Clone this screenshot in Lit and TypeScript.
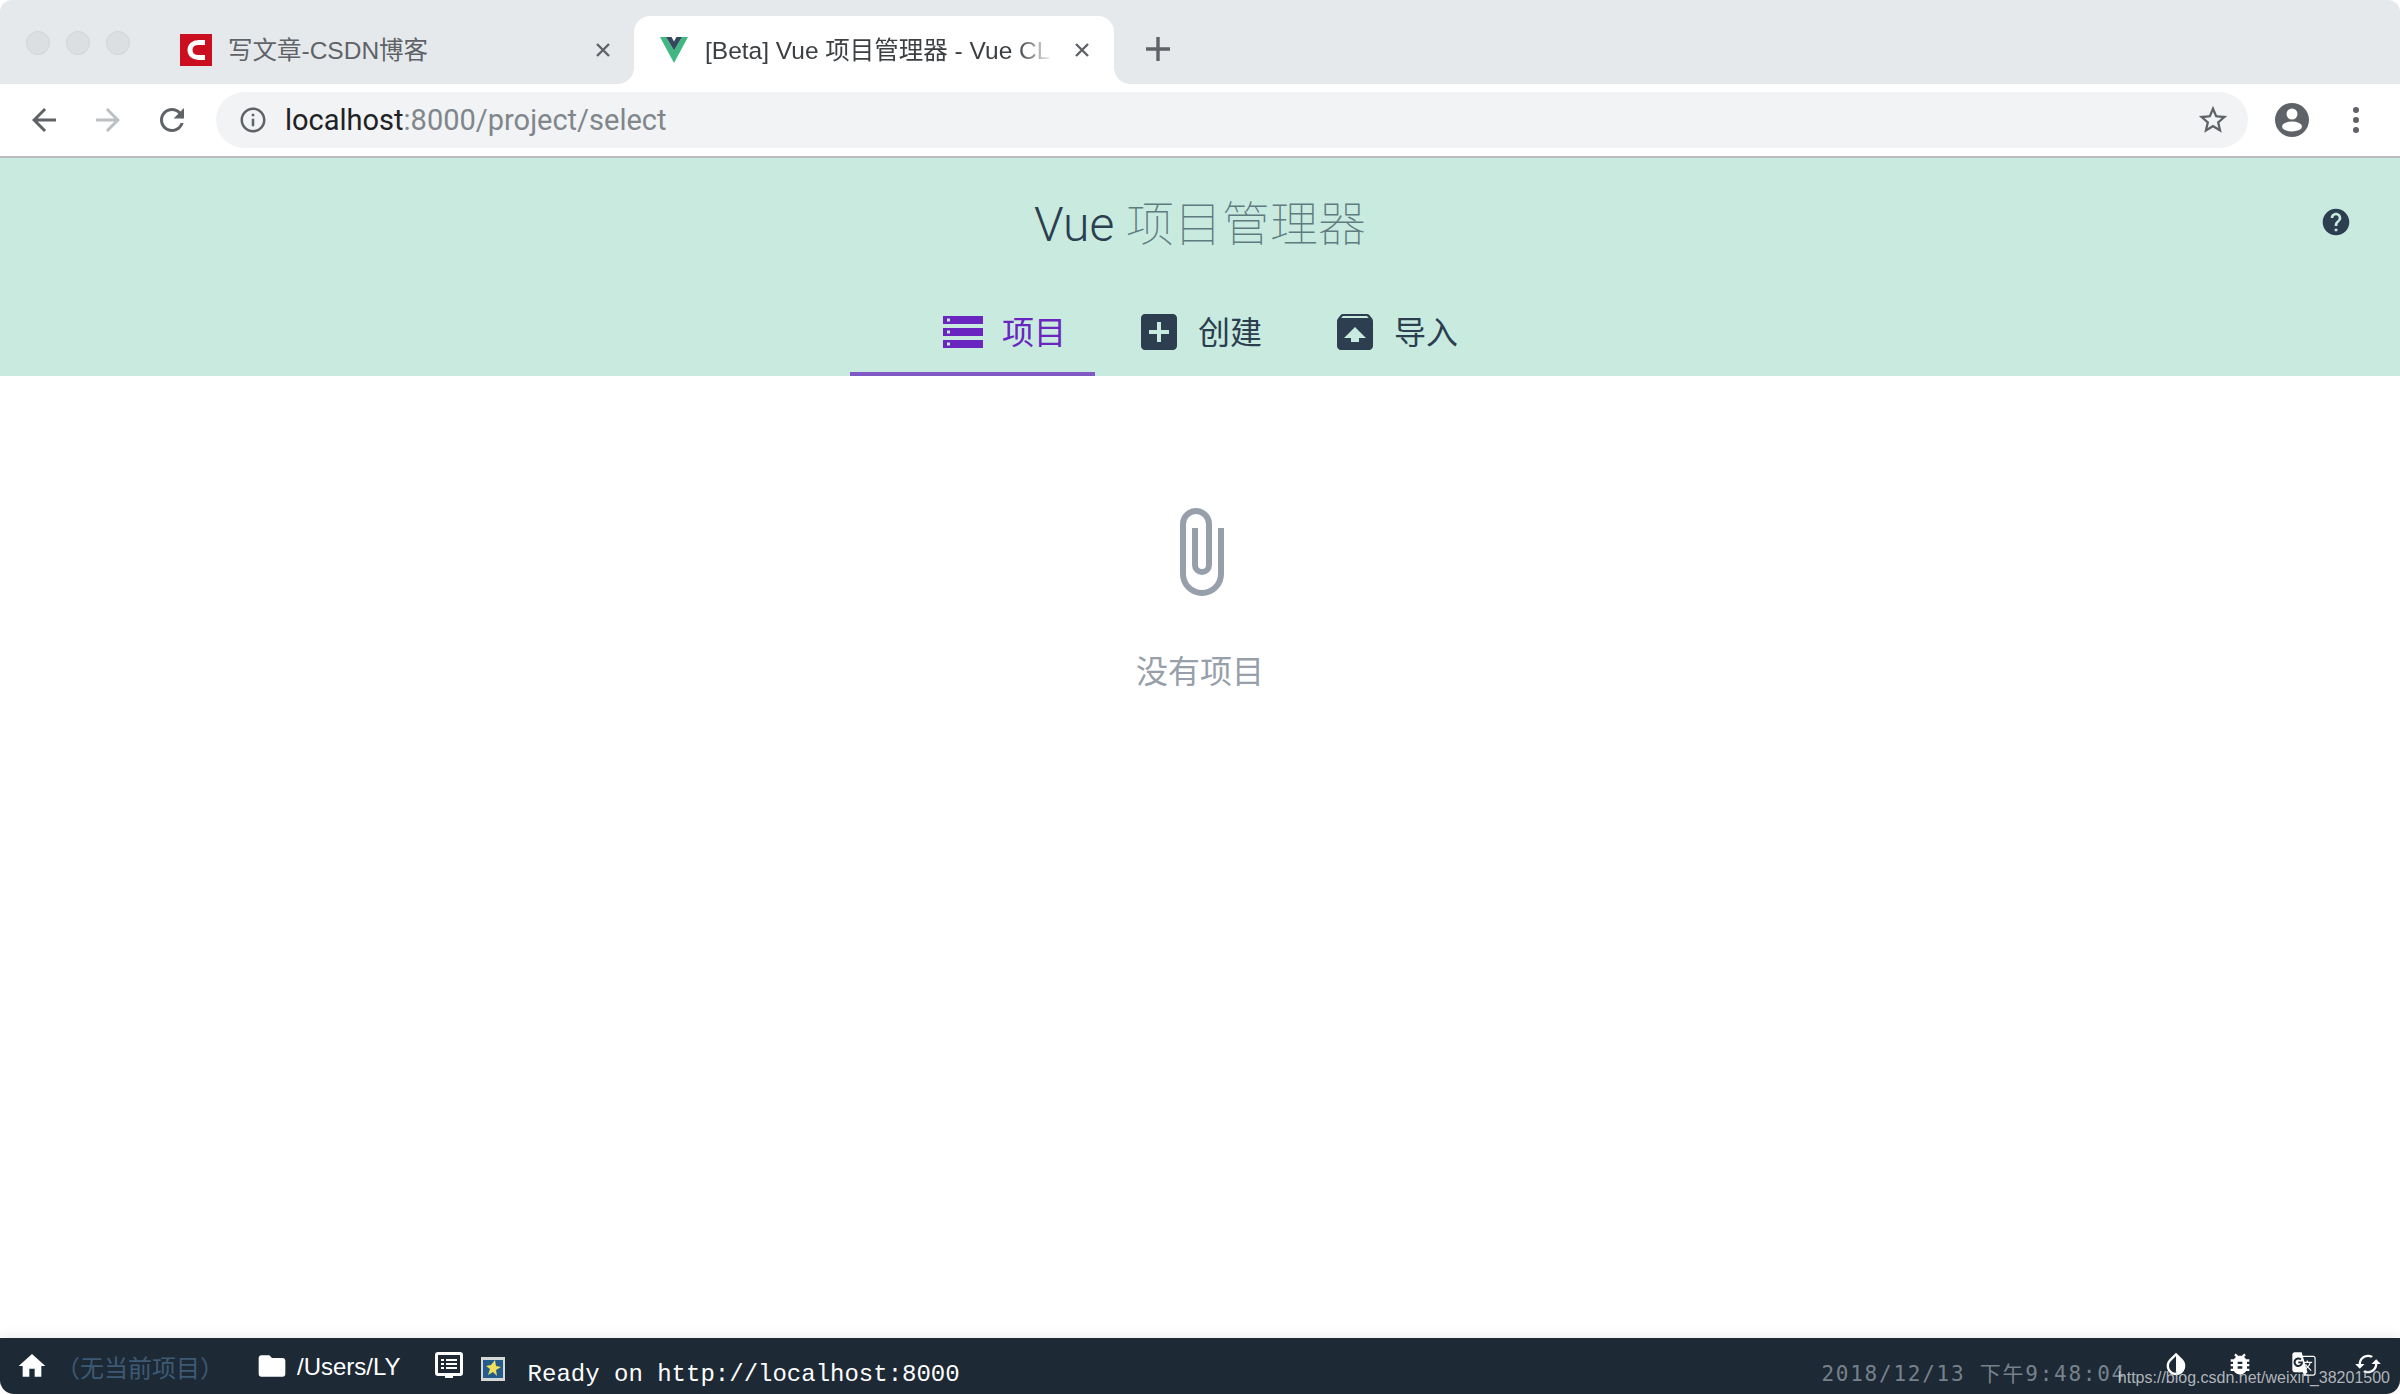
import { LitElement, html, css, svg } from "lit";
import { customElement } from "lit/decorators.js";

const P = {
  back: "M20 11H7.83l5.59-5.59L12 4l-8 8 8 8 1.41-1.41L7.83 13H20v-2z",
  forward: "M12 4l-1.41 1.41L16.17 11H4v2h12.17l-5.58 5.59L12 20l8-8z",
  reload: "M17.65 6.35C16.2 4.9 14.21 4 12 4c-4.42 0-7.99 3.58-7.99 8s3.57 8 7.99 8c3.73 0 6.84-2.55 7.73-6h-2.08c-.82 2.33-3.04 4-5.65 4-3.31 0-6-2.69-6-6s2.69-6 6-6c1.66 0 3.14.69 4.22 1.78L13 11h7V4l-2.35 2.35z",
  info: "M11 7h2v2h-2zm0 4h2v6h-2zm1-9C6.48 2 2 6.48 2 12s4.48 10 10 10 10-4.48 10-10S17.52 2 12 2zm0 18c-4.41 0-8-3.59-8-8s3.59-8 8-8 8 3.59 8 8-3.59 8-8 8z",
  star: "M22 9.24l-7.19-.62L12 2 9.19 8.63 2 9.24l5.46 4.73L5.82 21 12 17.27 18.18 21l-1.63-7.03L22 9.24zM12 15.4l-3.76 2.27 1-4.28-3.32-2.88 4.38-.38L12 6.1l1.71 4.04 4.38.38-3.32 2.88 1 4.28L12 15.4z",
  help: "M12 2C6.48 2 2 6.48 2 12s4.48 10 10 10 10-4.48 10-10S17.52 2 12 2zm1 17h-2v-2h2v2zm2.07-7.75l-.9.92C13.45 12.9 13 13.5 13 15h-2v-.5c0-1.1.45-2.1 1.17-2.83l1.24-1.26c.37-.36.59-.86.59-1.41 0-1.1-.9-2-2-2s-2 .9-2 2H8c0-2.21 1.79-4 4-4s4 1.79 4 4c0 .88-.36 1.68-.93 2.25z",
  add: "M19 3H5c-1.11 0-2 .9-2 2v14c0 1.1.89 2 2 2h14c1.1 0 2-.9 2-2V5c0-1.1-.9-2-2-2zm-2 10h-4v4h-2v-4H7v-2h4V7h2v4h4v2z",
  unarchive: "M20.55 5.22l-1.39-1.68C18.88 3.21 18.47 3 18 3H6c-.47 0-.88.21-1.15.55L3.46 5.22C3.17 5.57 3 6.01 3 6.5V19c0 1.1.89 2 2 2h14c1.1 0 2-.9 2-2V6.5c0-.49-.17-.93-.45-1.28zM12 9.5l5.5 5.5H14v2h-4v-2H6.5L12 9.5zM5.12 5l.82-1h12l.93 1H5.12z",
  home: "M10 20v-6h4v6h5v-8h3L12 3 2 12h3v8z",
  folder: "M10 4H4c-1.1 0-1.99.9-1.99 2L2 18c0 1.1.9 2 2 2h16c1.1 0 2-.9 2-2V8c0-1.1-.9-2-2-2h-8l-2-2z",
  invert: "M17.66 7.93L12 2.27 6.34 7.93c-3.12 3.12-3.12 8.19 0 11.31C7.9 20.8 9.95 21.58 12 21.58c2.05 0 4.1-.78 5.66-2.34 3.12-3.12 3.12-8.19 0-11.31zM12 19.59c-1.6 0-3.11-.62-4.24-1.76C6.62 16.69 6 15.19 6 13.59s.62-3.11 1.76-4.24L12 5.1v14.49z",
  bug: "M20 8h-2.81c-.45-.78-1.07-1.45-1.82-1.96L17 4.41 15.59 3l-2.17 2.17C12.96 5.06 12.49 5 12 5c-.49 0-.96.06-1.41.17L8.41 3 7 4.41l1.62 1.63C7.88 6.55 7.26 7.22 6.81 8H4v2h2.09c-.05.33-.09.66-.09 1v1H4v2h2v1c0 .34.04.67.09 1H4v2h2.81c1.04 1.79 2.97 3 5.19 3s4.15-1.21 5.19-3H20v-2h-2.09c.05-.33.09-.66.09-1v-1h2v-2h-2v-1c0-.34-.04-.67-.09-1H20V8zm-6 8h-4v-2h4v2zm0-4h-4v-2h4v2z",
  translate: "M20 5h-9.12L10 2H4c-1.1 0-2 .9-2 2v13c0 1.1.9 2 2 2h7l1 3h8c1.1 0 2-.9 2-2V7c0-1.1-.9-2-2-2zM7.17 14.59c-2.25 0-4.09-1.83-4.09-4.09s1.83-4.09 4.09-4.09c1.04 0 1.99.37 2.74 1.07l.07.06-1.23 1.18-.06-.05c-.29-.27-.78-.59-1.52-.59-1.31 0-2.38 1.09-2.38 2.42s1.07 2.42 2.38 2.42c1.37 0 1.96-.87 2.12-1.46H7.08V9.91h3.95l.01.07c.04.21.05.4.05.61 0 2.35-1.61 4-3.92 4zm6.03-1.71c.33.6.74 1.18 1.19 1.7l-.54.53-.65-2.23zm.77-.76h-.99l-.31-1.04h3.99s-.34 1.31-1.56 2.74c-.52-.62-.89-1.23-1.13-1.7zM21 20c0 .55-.45 1-1 1h-7l2-2-.81-2.77.92-.92L17.79 18l.73-.73-2.71-2.68c.9-1.03 1.6-2.25 1.92-3.51H19v-1.04h-3.64V9h-1.04v1.04h-1.96L11.18 6H20c.55 0 1 .45 1 1v13z",
  cached: "M19 8l-4 4h3c0 3.31-2.69 6-6 6-1.01 0-1.97-.25-2.8-.7l-1.46 1.46C8.97 19.54 10.43 20 12 20c4.42 0 8-3.58 8-8h3l-4-4zM6 12c0-3.31 2.69-6 6-6 1.01 0 1.97.25 2.8.7l1.46-1.46C15.03 4.46 13.57 4 12 4c-4.42 0-8 3.58-8 8H1l4 4 4-4H6z",
};

const icon = (d: string, cls: string, box = "0 0 24 24") =>
  html`<svg class="icon ${cls}" viewBox=${box} fill="currentColor">${svg`<path d=${d}></path>`}</svg>`;

@customElement("app-root")
export class AppRoot extends LitElement {
  static styles = css`
    :host {
      display: block;
      height: 100vh;
      background: #fff;
      font-family: "Liberation Sans", "Noto Sans CJK SC", sans-serif;
    }
    * { box-sizing: border-box; }
    .window {
      position: relative;
      display: flex;
      flex-direction: column;
      height: 100%;
      overflow: hidden;
      border-radius: 12px 12px 14px 14px;
      background: #fff;
    }
    .icon { display: block; flex: none; }

    /* tab strip */
    .strip {
      display: flex;
      align-items: flex-end;
      height: 84px;
      flex: none;
      background: #e6e9ec;
    }
    .lights { display: flex; gap: 16px; padding: 0 0 29px 26px; width: 166px; flex: none; }
    .light {
      width: 24px; height: 24px; border-radius: 50%;
      background: #dcdfe1; border: 1px solid #d2d5d8;
    }
    .tab {
      display: flex; align-items: center;
      height: 68px; flex: none;
      font-size: 24.500px;
    }
    .tab.idle { width: 468px; padding: 0 0 0 14px; color: #5f6368; }
    .tab.active {
      position: relative;
      width: 480px; padding: 0 0 0 26px;
      background: #fff; color: #3c4043;
      border-radius: 16px 16px 0 0;
    }
    .tab.active::before, .tab.active::after {
      content: ""; position: absolute; bottom: 0; width: 16px; height: 16px;
    }
    .tab.active::before { left: -16px; background: radial-gradient(circle at 0 0, transparent 15.5px, #fff 16px); }
    .tab.active::after { right: -16px; background: radial-gradient(circle at 100% 0, transparent 15.5px, #fff 16px); }
    .fav { width: 32px; height: 32px; flex: none; }
    .fav-vue { width: 28px; height: 26px; flex: none; }
    .tab-title { margin: -3px 0 0 16px; white-space: nowrap; overflow: hidden; }
    .tab.idle .tab-title { width: 366px; }
    .tab.active .tab-title {
      margin-left: 17px; width: 355px;
      -webkit-mask-image: linear-gradient(90deg, #000 88%, transparent 98%);
      mask-image: linear-gradient(90deg, #000 88%, transparent 98%);
    }
    .close { width: 18px; height: 18px; flex: none; color: #5f6368; }
    .tab.active .close { margin-left: 13px; }
    .plus { width: 24px; height: 24px; margin: 0 0 23px 32px; color: #5f6368; }

    /* toolbar */
    .toolbar {
      display: flex; align-items: center;
      height: 74px; flex: none;
      background: #fff;
      border-bottom: 2px solid #b9bcbe;
      color: #5f6368;
    }
    .nav-btn { width: 36px; height: 36px; margin-left: 26px; }
    .nav-btn + .nav-btn { margin-left: 28px; }
    .nav-btn.off { color: #bdc0c3; }
    .omni {
      display: flex; align-items: center;
      width: 2032px; height: 56px;
      margin-left: 26px; padding: 0 18px 0 22px;
      background: #f1f3f4;
      border-radius: 28px;
    }
    .info { width: 30px; height: 30px; }
    .url {
      flex: 1; margin-left: 17px;
      font-family: Roboto, "Liberation Sans", sans-serif;
      font-size: 29px; color: #80868b; white-space: nowrap;
    }
    .url b { font-weight: 400; color: #202124; }
    .star { width: 34px; height: 34px; }
    .avatar { width: 36px; height: 36px; margin-left: 26px; }
    .dots { display: flex; flex-direction: column; gap: 4px; margin-left: 43px; }
    .dots i { display: block; width: 6px; height: 6px; border-radius: 50%; background: #5f6368; }

    /* header */
    .header {
      position: relative;
      display: flex; flex-direction: column; align-items: center;
      height: 218px; flex: none;
      background: #c9ebdf;
      color: #2c3e50;
    }
    .title {
      margin: 0; padding-top: 41px; height: 156px;
      font-family: Roboto, "Noto Sans CJK SC", sans-serif;
      font-size: 48px; font-weight: 300; line-height: 52px;
    }
    .title span { color: #5f7a80; font-weight: 100; }
    .help { position: absolute; right: 48px; top: 48px; width: 32px; height: 32px; }
    .tabs { display: flex; height: 62px; flex: none; }
    .nav {
      display: flex; align-items: center;
      height: 62px; padding-bottom: 22px;
      font-family: "Noto Sans CJK SC", sans-serif;
      font-size: 32px; font-weight: 400;
      border-bottom: 4px solid transparent;
      color: #2c3e50;
    }
    .nav span { margin: -5px 0 0 19px; }
    .nav.sel {
      width: 245px; padding-left: 93px;
      color: #6a24bf;
      border-bottom-color: #8159c4;
    }
    .nav.two { width: 205px; padding-left: 46px; }
    .nav.three { width: 250px; padding-left: 37px; }
    .sel-icon { width: 40px; height: 32px; }
    .nav-icon { width: 36px; height: 36px; }
    .nav .nav-icon + span { margin-left: 21px; }

    /* main */
    .main {
      flex: 1;
      display: flex; flex-direction: column; align-items: center;
      padding-top: 132px;
      color: #97a0aa;
    }
    .clip { width: 44px; height: 88px; margin-left: 4px; }
    .empty {
      margin-top: 49px;
      font-family: "Noto Sans CJK SC", sans-serif;
      font-size: 32px; font-weight: 400; line-height: 48px;
    }

    /* status bar */
    .status {
      display: flex; align-items: center;
      height: 56px; flex: none;
      padding-left: 16px;
      background: #1d2935;
      box-shadow: 0 0 14px rgba(0,0,0,.1);
      color: #fff;
      font-size: 24px;
    }
    .s-home { width: 32px; height: 32px; }
    .s-project {
      margin-left: 8px;
      font-family: "Noto Sans CJK SC", sans-serif;
      font-weight: 400; color: #3d5a75; white-space: nowrap;
    }
    .s-folder { width: 32px; height: 32px; margin-left: 32px; }
    .s-path { margin: 2px 0 0 9px; white-space: nowrap; }
    .s-log { width: 30px; height: 30px; margin-left: 33px; }
    .s-pic { width: 24px; height: 24px; margin-left: 17px; margin-top: 6px; }
    .s-ready {
      margin: 16px 0 0 23px;
      font-family: "Liberation Mono", monospace;
      font-size: 24px; white-space: pre;
    }
    .s-right { display: flex; align-items: center; margin-left: auto; }
    .s-date {
      font-family: "DejaVu Sans Mono", "Noto Sans CJK SC", monospace;
      font-size: 21px; letter-spacing: 1.75px; color: #77818b; white-space: pre;
      margin-top: 11px;
    }
    .s-ic { width: 28px; height: 28px; margin-top: -4px; }
    .s-ic.a { margin-left: 36px; }
    .s-ic + .s-ic { margin-left: 36px; }
    .s-ic.z { margin-right: 18px; }
    .mark {
      position: absolute; right: 10px; bottom: 7px;
      font-size: 16px; color: rgba(215,218,222,.8); white-space: nowrap;
    }
  `;

  render() {
    return html`
      <div class="window">
        <div class="strip">
          <div class="lights"><i class="light"></i><i class="light"></i><i class="light"></i></div>
          <div class="tab idle">
            <svg class="fav" viewBox="0 0 32 32">
              <rect width="32" height="32" fill="#cb0f20"></rect>
              <path d="M25 8.500H18.500C13.500 8.500 10 11.500 10 16s3.500 7.500 8.500 7.500H25" fill="none" stroke="#fff" stroke-width="5"></path>
            </svg>
            <span class="tab-title">写文章-CSDN博客</span>
            <svg class="close" viewBox="0 0 18 18"><path d="M3 3l12 12M15 3L3 15" stroke="currentColor" stroke-width="2.400"></path></svg>
          </div>
          <div class="tab active">
            <svg class="fav-vue" viewBox="0 0 28 26">
              <path d="M0 0h6l8 13.500L22 0h6L14 26z" fill="#41b883"></path>
              <path d="M6 0h5.500l2.500 4.500L16.500 0H22l-8 13.500z" fill="#35495e"></path>
            </svg>
            <span class="tab-title">[Beta] Vue 项目管理器 - Vue CLI</span>
            <svg class="close" viewBox="0 0 18 18"><path d="M3 3l12 12M15 3L3 15" stroke="currentColor" stroke-width="2.400"></path></svg>
          </div>
          <svg class="plus" viewBox="0 0 24 24"><path d="M12 0v24M0 12h24" stroke="currentColor" stroke-width="3.400"></path></svg>
        </div>

        <div class="toolbar">
          ${icon(P.back, "nav-btn")}
          ${icon(P.forward, "nav-btn off")}
          ${icon(P.reload, "nav-btn")}
          <div class="omni">
            ${icon(P.info, "info")}
            <div class="url"><b>localhost</b>:8000/project/select</div>
            ${icon(P.star, "star")}
          </div>
          <svg class="icon avatar" viewBox="0 0 36 36">
            <circle cx="18" cy="18" r="17" fill="currentColor"></circle>
            <circle cx="18" cy="12" r="5.500" fill="#fff"></circle>
            <ellipse cx="18" cy="24.500" rx="10" ry="5" fill="#fff"></ellipse>
          </svg>
          <div class="dots"><i></i><i></i><i></i></div>
        </div>

        <div class="header">
          <h1 class="title">Vue <span>项目管理器</span></h1>
          ${icon(P.help, "help")}
          <div class="tabs">
            <div class="nav sel">
              <svg class="icon sel-icon" viewBox="0 0 40 32" fill="currentColor">
                <path fill-rule="evenodd" d="M0 0h40v8H0zM4 2.500v3h3v-3zM0 12h40v8H0zM4 14.500v3h3v-3zM0 24h40v8H0zM4 26.500v3h3v-3z"></path>
              </svg>
              <span>项目</span>
            </div>
            <div class="nav two">${icon(P.add, "nav-icon", "3 3 18 18")}<span>创建</span></div>
            <div class="nav three">${icon(P.unarchive, "nav-icon", "3 3 18 18")}<span>导入</span></div>
          </div>
        </div>

        <div class="main">
          <svg class="icon clip" viewBox="0 0 44 88" fill="none" stroke="currentColor" stroke-width="6">
            <path d="M41 20V66a19 19 0 0 1-38 0V16a13 13 0 0 1 26 0V57a7 7 0 0 1-14 0V20"></path>
          </svg>
          <div class="empty">没有项目</div>
        </div>

        <div class="status">
          ${icon(P.home, "s-home")}
          <span class="s-project">（无当前项目）</span>
          ${icon(P.folder, "s-folder")}
          <span class="s-path">/Users/LY</span>
          <svg class="icon s-log" viewBox="0 0 30 30" fill="currentColor">
            <path fill-rule="evenodd" d="M4 1h22a3 3 0 0 1 3 3v18a3 3 0 0 1-3 3h-7v2h-8v-2H4a3 3 0 0 1-3-3V4a3 3 0 0 1 3-3zM4 4v18h22V4zM7 8h3v2H7zM12 8h11v2H12zM7 12h3v2H7zM12 12h11v2H12zM7 16h3v2H7zM12 16h11v2H12z"></path>
          </svg>
          <svg class="icon s-pic" viewBox="0 0 24 24">
            <rect width="24" height="24" fill="#d5d8d6"></rect>
            <rect x="2" y="3" width="20" height="18" fill="#265c8c"></rect>
            <path d="M14 3l1 6 5 1-5 3 1 6-4-4-5 3 2-6-4-3 5-1z" fill="#f2e05a"></path>
          </svg>
          <span class="s-ready">Ready on http://localhost:8000</span>
          <div class="s-right">
            <span class="s-date">2018/12/13 下午9:48:04</span>
            ${icon(P.invert, "s-ic a")}
            ${icon(P.bug, "s-ic")}
            ${icon(P.translate, "s-ic")}
            ${icon(P.cached, "s-ic z")}
          </div>
          <span class="mark">https://blog.csdn.net/weixin_38201500</span>
        </div>
      </div>
    `;
  }
}
